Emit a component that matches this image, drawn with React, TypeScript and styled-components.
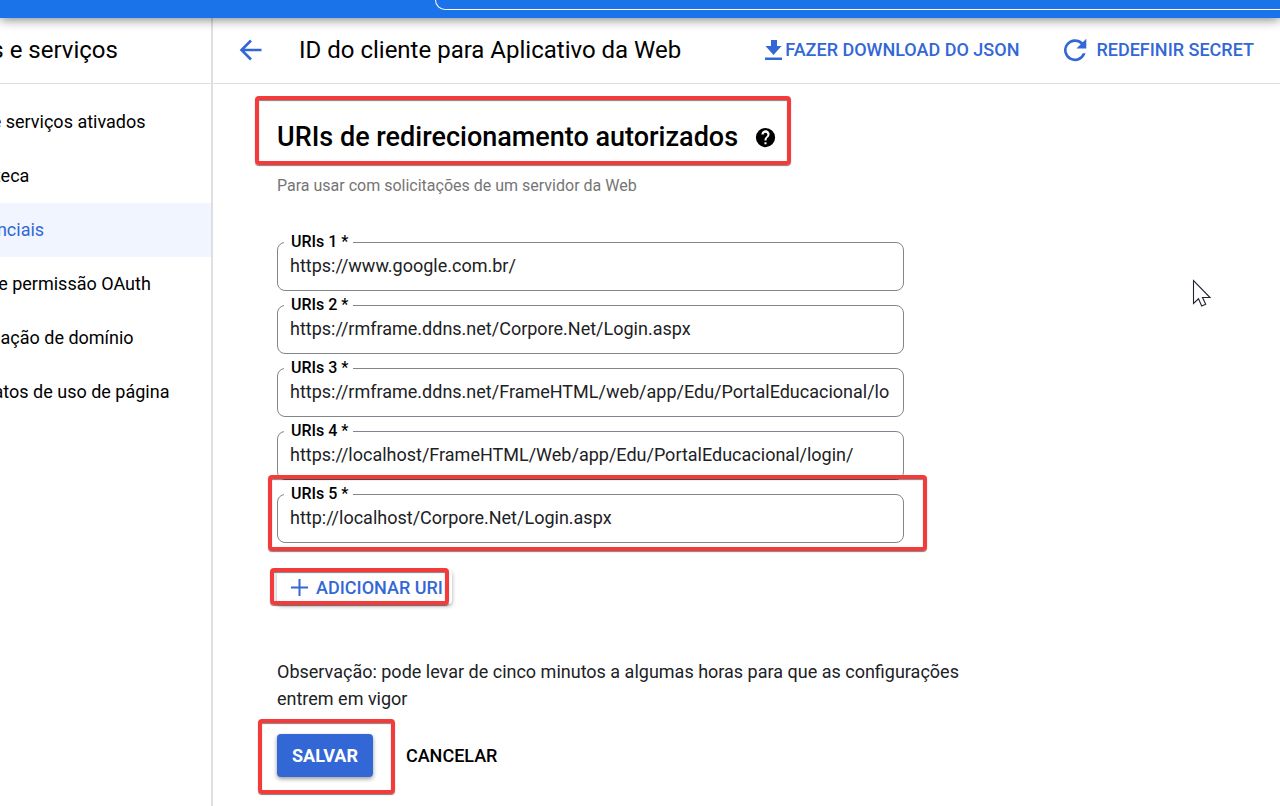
import React from "react";
import styled, { createGlobalStyle } from "styled-components";

const blue = "#3367d6";

const GlobalStyle = createGlobalStyle`
  * { box-sizing: border-box; }
  body {
    margin: 0;
    background: #fff;
    color: #000;
    font-family: Roboto, "Liberation Sans", sans-serif;
    font-size: 18px;
  }
  button, input { font: inherit; }
`;

const Page = styled.div`
  position: relative;
  min-height: 100vh;
  display: flex;
  flex-direction: column;
`;

const TopBar = styled.header`
  position: relative;
  z-index: 2;
  height: 18px;
  padding-left: 435px;
  background: #1a73e8;
  box-shadow: 0 1px 12px rgba(0, 0, 0, 0.55);
`;

const SearchEdge = styled.div`
  height: 10px;
  border: 1px solid #fff;
  border-width: 0 0 1px 1px;
  border-bottom-left-radius: 10px;
`;

const Columns = styled.div`
  flex: 1;
  display: grid;
  grid-template-columns: 213px minmax(0, 1fr);
`;

const Sidebar = styled.aside`
  overflow: hidden;
  border-right: 2px solid #dfdfdf;
  white-space: nowrap;
`;

const SidebarTitle = styled.h2`
  height: 66px;
  margin: 0 0 11px;
  padding-bottom: 2px;
  border-bottom: 1px solid #dfdfdf;
  font-size: 24px;
  font-weight: 400;
  line-height: 64px;
`;

const Shifted = styled.span<{ $by: number }>`
  margin-left: -${(p) => p.$by}px;
`;

const NavItem = styled.a<{ $active?: boolean }>`
  display: block;
  line-height: 54px;
  text-decoration: none;
  color: ${(p) => (p.$active ? blue : "#000")};
  background: ${(p) => (p.$active ? "#f0f5ff" : "transparent")};
`;

const Main = styled.main`
  min-width: 0;
`;

const Toolbar = styled.div`
  display: flex;
  align-items: center;
  height: 66px;
  padding: 0 26px 2px 26px;
  border-bottom: 1px solid #dfdfdf;
`;

const PageTitle = styled.h1`
  flex: 1;
  margin: 0 0 0 35px;
  font-size: 24px;
  font-weight: 400;
  white-space: nowrap;
`;

const ToolButton = styled.button<{ $gap: number }>`
  display: flex;
  align-items: center;
  gap: ${(p) => p.$gap}px;
  padding: 0;
  border: 0;
  background: none;
  color: ${blue};
  font-weight: 500;
  white-space: nowrap;
  & + & { margin-left: 44px; }
  svg { display: block; }
`;

const Content = styled.section`
  padding: 31px 64px 0;
`;

const Marked = styled.div<{ $inset: string }>`
  position: relative;
  width: fit-content;
  max-width: 100%;
  &::after {
    content: "";
    position: absolute;
    z-index: 1;
    inset: ${(p) => p.$inset};
    border: 4px solid #f43b3b;
    border-radius: 4px;
    box-shadow: 0 1px 1px rgba(0, 0, 0, 0.5), inset 0 1px 1px rgba(0, 0, 0, 0.5);
    pointer-events: none;
  }
`;

const Heading = styled.h2`
  display: flex;
  align-items: center;
  gap: 17px;
  margin: 0;
  font-size: 27px;
  font-weight: 500;
  line-height: 44px;
  white-space: nowrap;
`;

const Hint = styled.p`
  margin: 17px 0 46px;
  color: #757575;
  font-size: 16px;
  line-height: 20px;
`;

const Fields = styled.div`
  display: flex;
  flex-direction: column;
  gap: 14px;
  max-width: 627px;
`;

const Field = styled.div`
  position: relative;
  width: 627px;
  max-width: 100%;
  height: 49px;
  border: 1px solid #80868b;
  border-radius: 8px;
`;

const FieldLabel = styled.label`
  position: absolute;
  top: -11px;
  left: 6px;
  padding: 0 5px 0 7px;
  background: #fff;
  font-size: 16px;
  font-weight: 500;
  line-height: 20px;
`;

const FieldInput = styled.input`
  display: block;
  width: calc(100% - 25px);
  height: 45px;
  margin: 0 13px 0 12px;
  padding: 0;
  border: 0;
  outline: 0;
  background: transparent;
  color: #202124;
`;

const AddRow = styled.div`
  margin: 27px 0 54px;
`;

const AddButton = styled.button`
  display: flex;
  align-items: center;
  gap: 8px;
  height: 34px;
  padding: 0 9px 0 14px;
  border: 0;
  border-radius: 4px;
  background: #fff;
  box-shadow: 0 2px 4px rgba(0, 0, 0, 0.35);
  color: ${blue};
  font-weight: 500;
  white-space: nowrap;
`;

const Note = styled.p`
  max-width: 700px;
  margin: 0 0 22px;
  color: #202124;
  line-height: 27px;
`;

const Actions = styled.div`
  display: flex;
  align-items: center;
  gap: 33px;
`;

const SaveButton = styled.button`
  display: block;
  height: 43px;
  padding: 0 15px;
  border: 0;
  border-radius: 4px;
  background: ${blue};
  box-shadow: 0 2px 4px rgba(0, 0, 0, 0.4);
  color: #fff;
  font-weight: 700;
`;

const CancelButton = styled.button`
  padding: 0;
  border: 0;
  background: none;
  color: #000;
  font-weight: 500;
`;

const BackButton = styled.button`
  padding: 0;
  border: 0;
  background: none;
  svg { display: block; }
`;

const Pointer = styled.svg`
  position: absolute;
  z-index: 3;
  left: 1192px;
  top: 279px;
`;

const navItems = [
  { text: "APIs e serviços ativados" },
  { text: "Biblioteca" },
  { text: "Credenciais", active: true },
  { text: "Tela de permissão OAuth" },
  { text: "Verificação de domínio" },
  { text: "Contratos de uso de página" },
];

const uris = [
  "https://www.google.com.br/",
  "https://rmframe.ddns.net/Corpore.Net/Login.aspx",
  "https://rmframe.ddns.net/FrameHTML/web/app/Edu/PortalEducacional/login/",
  "https://localhost/FrameHTML/Web/app/Edu/PortalEducacional/login/",
  "http://localhost/Corpore.Net/Login.aspx",
];

function UriField({ index, value }: { index: number; value: string }) {
  const id = `uri-${index}`;
  return (
    <Field>
      <FieldLabel htmlFor={id}>URIs {index} *</FieldLabel>
      <FieldInput id={id} type="text" defaultValue={value} />
    </Field>
  );
}

export default function App() {
  return (
    <Page>
      <GlobalStyle />
      <TopBar>
        <SearchEdge />
      </TopBar>
      <Columns>
        <Sidebar>
          <SidebarTitle>
            <Shifted $by={46}>APIs e serviços</Shifted>
          </SidebarTitle>
          <nav>
            {navItems.map((item) => (
              <NavItem key={item.text} href="#" $active={item.active}>
                <Shifted $by={50}>{item.text}</Shifted>
              </NavItem>
            ))}
          </nav>
        </Sidebar>
        <Main>
          <Toolbar>
            <BackButton aria-label="Voltar">
              <svg width="25" height="24" viewBox="0 0 25 24" fill="none" stroke={blue} strokeWidth="2.6">
                <path d="M22.500 12H3M12 2.500 2.500 12l9.500 9.500" />
              </svg>
            </BackButton>
            <PageTitle>ID do cliente para Aplicativo da Web</PageTitle>
            <ToolButton $gap={3}>
              <svg width="17" height="22" viewBox="0 0 17 22" fill={blue}>
                <path d="M6 1h6v6h4.500L8.500 16 .5 7H6zM0 18.500h17V21H0z" />
              </svg>
              FAZER DOWNLOAD DO JSON
            </ToolButton>
            <ToolButton $gap={9}>
              <svg width="24" height="24" viewBox="0 0 24 24" fill={blue}>
                <path d="M19.700 4.300A11 11 0 1 0 22.600 15.200h-2.900a8.300 8.300 0 1 1-2-8.900L13.500 10.500H23.300V.7z" />
              </svg>
              REDEFINIR SECRET
            </ToolButton>
          </Toolbar>
          <Content>
            <Marked $inset="-19px -15px -6px -22px">
              <Heading>
                URIs de redirecionamento autorizados
                <svg width="21" height="21" viewBox="0 0 24 24" role="img" aria-label="Ajuda">
                  <path d="M12 1a11 11 0 1 0 0 22 11 11 0 0 0 0-22zm1.200 18.600h-2.400v-2.300h2.400zm2.400-8.500-1 1c-.9.900-1.400 1.600-1.400 3.300h-2.400v-.6c0-1.200.5-2.300 1.400-3.200l1.400-1.400c.4-.4.600-.9.600-1.500a2.200 2.200 0 0 0-4.400 0H7.400a4.600 4.600 0 1 1 8.200 2.400z" />
                </svg>
              </Heading>
            </Marked>
            <Hint>Para usar com solicitações de um servidor da Web</Hint>
            <Fields>
              {uris.slice(0, 4).map((uri, i) => (
                <UriField key={i} index={i + 1} value={uri} />
              ))}
              <Marked $inset="-19px -23px -8px -9px">
                <UriField index={5} value={uris[4]} />
              </Marked>
            </Fields>
            <AddRow>
              <Marked $inset="-2px 3px -1px -7px">
                <AddButton>
                  <svg width="17" height="17" viewBox="0 0 17 17" stroke={blue} strokeWidth="2">
                    <path d="M8.500 0v17M0 8.500h17" />
                  </svg>
                  ADICIONAR URI
                </AddButton>
              </Marked>
            </AddRow>
            <Note>
              Observação: pode levar de cinco minutos a algumas horas para que as configurações entrem em vigor
            </Note>
            <Actions>
              <Marked $inset="-15px -22px -17px -19px">
                <SaveButton>SALVAR</SaveButton>
              </Marked>
              <CancelButton>CANCELAR</CancelButton>
            </Actions>
          </Content>
        </Main>
      </Columns>
      <Pointer width="22" height="30" viewBox="0 0 22 30" fill="#fff" stroke="#223" strokeWidth="1.100" aria-hidden="true">
        <path d="M1.500 1.500v23l5-4.700 3.200 7.200 4-1.700-3.200-6.800h7.500z" />
      </Pointer>
    </Page>
  );
}
